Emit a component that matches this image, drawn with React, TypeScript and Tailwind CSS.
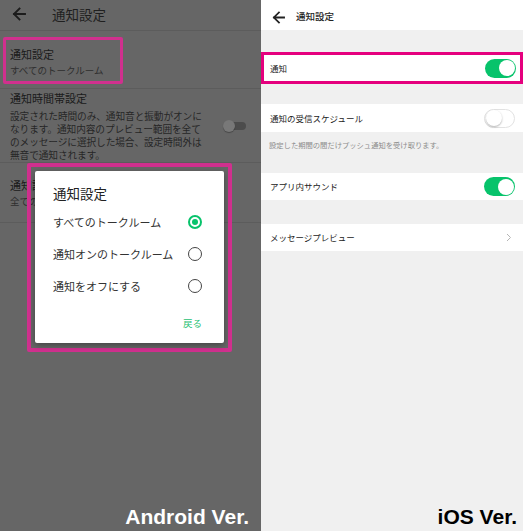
import React from "react";

const jp = "font-['Noto_Sans_CJK_JP','Noto_Sans',sans-serif]";

function BackArrow({ className, size = 14 }: { className?: string; size?: number }) {
  return (
    <svg width={size} height={size} viewBox="0 0 14 14" fill="none" className={className}>
      <path d="M13 7H2M7.5 1.5L2 7l5.5 5.5" stroke="currentColor" strokeWidth="1.9" strokeLinecap="square" />
    </svg>
  );
}

function Radio({ checked }: { checked?: boolean }) {
  if (checked) {
    return (
      <div className="flex h-[14px] w-[14px] items-center justify-center rounded-full border-2 border-[#07c36b]">
        <div className="h-[6px] w-[6px] rounded-full bg-[#07c36b]" />
      </div>
    );
  }
  return <div className="h-[14px] w-[14px] rounded-full border-[1.8px] border-[#444]" />;
}

function IosToggle({ on }: { on?: boolean }) {
  if (on) {
    return (
      <div className="flex h-[19px] w-[31px] items-center justify-end rounded-full bg-[#07c36b] px-[1.5px]">
        <div className="h-[16px] w-[16px] rounded-full bg-white" />
      </div>
    );
  }
  return (
    <div className="flex h-[19px] w-[31px] items-center rounded-full border border-[#e2e2e2] bg-white px-[0.5px]">
      <div className="h-[16px] w-[16px] rounded-full bg-white shadow-[0_1px_2px_rgba(0,0,0,0.3)]" />
    </div>
  );
}

function AndroidPanel() {
  return (
    <div className={`relative flex h-full w-[261px] flex-col bg-[#666666] ${jp}`}>
      <div className="flex h-[31px] items-center border-b border-[#5c5c5c] pb-[3px] pl-[12px]">
        <BackArrow className="text-[#1c1c1c]" />
        <span className="ml-[26px] text-[13.5px] leading-[18px] text-[#1f1f1f]">通知設定</span>
      </div>

      <div className="border-b border-[#5c5c5c] pl-[10px] pt-[15px] pb-[10px]">
        <div className="text-[11px] leading-[16px] text-[#1a1a1a]">通知設定</div>
        <div className="text-[9.5px] leading-[16px] text-[#2e2e2e]">すべてのトークルーム</div>
      </div>

      <div className="flex items-center border-b border-[#5c5c5c] pl-[10px] pr-[15px] pt-[1px]">
        <div className="flex-1">
          <div className="text-[11px] leading-[16px] text-[#1a1a1a]">通知時間帯設定</div>
          <div className="mt-[4px] text-[9.7px] leading-[13px] tracking-[-0.1px] text-[#262626]">
            <div>設定された時間のみ、通知音と振動がオンに</div>
            <div>なります。通知内容のプレビュー範囲を全て</div>
            <div>のメッセージに選択した場合、設定時間外は</div>
            <div>無音で通知されます。</div>
          </div>
        </div>
        <div className="relative flex h-[12px] w-[23px] items-center">
          <div className="ml-[3px] h-[8px] w-[20px] rounded-full bg-[#4c4c4c]" />
          <div className="absolute left-0 top-0 h-[12px] w-[12px] rounded-full bg-[#787878] shadow-[0_1px_1px_rgba(0,0,0,0.3)]" />
        </div>
      </div>

      <div className="h-[60px] border-b border-[#5c5c5c] pl-[10px] pt-[14px]">
        <div className="text-[11px] leading-[16px] text-[#1a1a1a]">通知設定</div>
        <div className="text-[9.5px] leading-[16px] text-[#2e2e2e]">全てのトークルーム</div>
      </div>

      <div className="mt-auto pb-[4px] pr-[12px] text-right font-['Liberation_Sans',Arial,sans-serif] text-[21px] font-bold leading-none text-white">
        Android Ver.
      </div>

      {/* annotation boxes and dialog lie over the list */}
      <div className="absolute left-[3px] top-[37px] h-[47px] w-[120px] rounded-[2px] border-[3.5px] border-[#d0308e]" />
      <div className="absolute left-[27px] top-[163px] h-[189px] w-[205px] rounded-[2px] border-[4px] border-[#d0308e]" />

      <div className="absolute left-[35px] top-[171px] flex h-[172px] w-[189px] flex-col rounded-[2px] bg-white pl-[18px] pr-[22px] shadow-[0_2px_6px_rgba(0,0,0,0.35)]">
        <div className="pt-[13px] text-[13.5px] leading-[18px] text-[#222]">通知設定</div>
        <div className="mt-[4px] flex flex-col">
          <div className="flex h-[32px] items-center justify-between">
            <span className="text-[11px] text-[#333]">すべてのトークルーム</span>
            <Radio checked />
          </div>
          <div className="flex h-[32px] items-center justify-between">
            <span className="text-[11px] text-[#333]">通知オンのトークルーム</span>
            <Radio />
          </div>
          <div className="flex h-[32px] items-center justify-between">
            <span className="text-[11px] text-[#333]">通知をオフにする</span>
            <Radio />
          </div>
        </div>
        <div className="mt-[14px] text-right text-[9.5px] leading-[14px] text-[#1fbf74]">戻る</div>
      </div>
    </div>
  );
}

function IosRow({ label, children, h = "h-[27px]" }: { label: string; children?: React.ReactNode; h?: string }) {
  return (
    <div className={`flex ${h} items-center justify-between bg-white pl-[9px] pr-[8px]`}>
      <span className="text-[8.5px] leading-none text-[#222]">{label}</span>
      {children}
    </div>
  );
}

function IosPanel() {
  return (
    <div className={`flex h-full w-[262px] flex-col bg-[#f0f0f0] ${jp}`}>
      <div className="flex h-[30px] items-center bg-white pl-[11px] pt-[4px]">
        <BackArrow size={13} className="text-[#222]" />
        <span className="ml-[11px] text-[9.5px] font-medium leading-none text-[#222]">通知設定</span>
      </div>

      <div className="mt-[22px] flex h-[32px] items-center justify-between border-[3px] border-[#e5007e] bg-white pl-[6px] pr-[4px]">
        <span className="text-[8.5px] leading-none text-[#222]">通知</span>
        <IosToggle on />
      </div>

      <div className="mt-[20px]">
        <IosRow label="通知の受信スケジュール" h="h-[28px]">
          <IosToggle />
        </IosRow>
      </div>
      <div className="h-[41px] pl-[8px] pt-[9px] text-[7.3px] leading-[8px] text-[#8c8c8c]">
        設定した期間の間だけプッシュ通知を受け取ります。
      </div>

      <IosRow label="アプリ内サウンド">
        <IosToggle on />
      </IosRow>

      <div className="mt-[24px]">
        <IosRow label="メッセージプレビュー">
          <svg width="6" height="9" viewBox="0 0 6 9" fill="none" className="mr-[3px]">
            <path d="M1 1l3.5 3.5L1 8" stroke="#b5b5b5" strokeWidth="1" />
          </svg>
        </IosRow>
      </div>

      <div className="mt-auto pb-[4px] pr-[6px] text-right font-['Liberation_Sans',Arial,sans-serif] text-[21px] font-bold leading-none text-black">
        iOS Ver.
      </div>
    </div>
  );
}

export default function App() {
  return (
    <div className="flex h-[531px] w-[526px] bg-white">
      <AndroidPanel />
      <IosPanel />
    </div>
  );
}
